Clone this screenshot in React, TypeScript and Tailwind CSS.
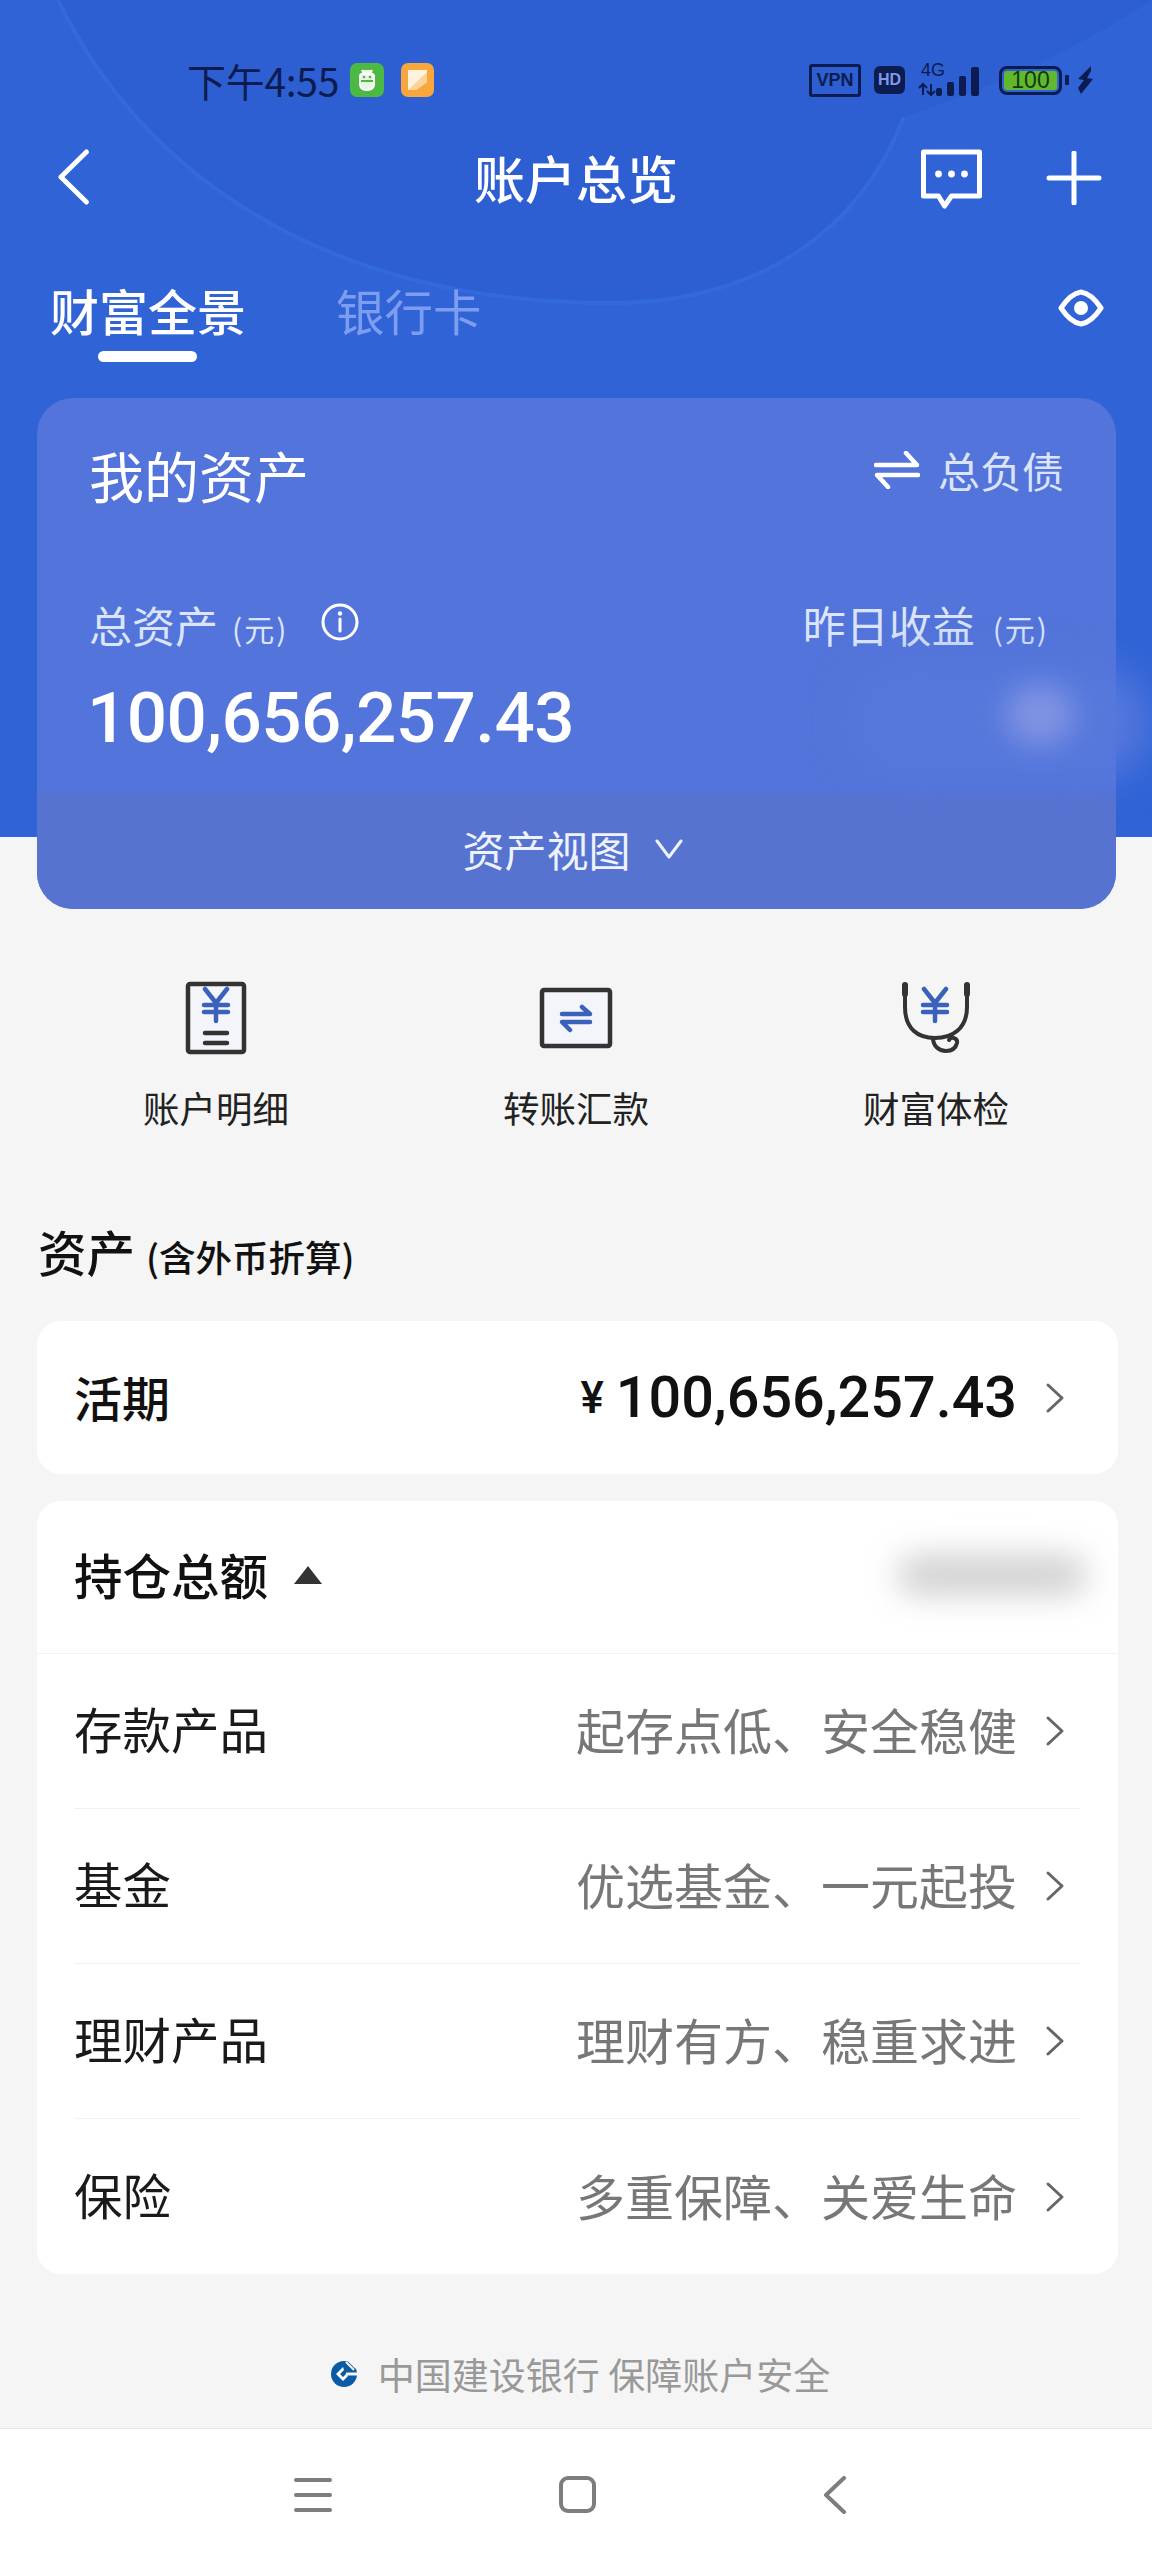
const CJK = { fontFamily: '"Noto Sans CJK SC", "Noto Sans", sans-serif' };

function Chevron() {
  return (
    <svg width="20" height="32" viewBox="0 0 20 32" fill="none" className="shrink-0">
      <path d="M3 3l14 13L3 29" stroke="#666" strokeWidth="3" strokeLinecap="round" strokeLinejoin="round" />
    </svg>
  );
}

function Yen({ x, y }: { x: number; y: number }) {
  return (
    <g transform={`translate(${x} ${y})`} stroke="#3a62bd" strokeWidth="4.5" strokeLinecap="round" fill="none">
      <path d="M-11 -16L0 -2L11 -16M0 -2V16M-12 0H12M-12 7H12" />
    </g>
  );
}

function StatusBar() {
  return (
    <div className="flex items-center h-[36px] mt-[62px] pl-[187px] pr-[58px] relative">
      <span className="text-[39px] leading-none text-[#0c1c50] w-[158px] tracking-[-0.3px] whitespace-nowrap" style={CJK}>下午4:55</span>
      <div className="w-[34px] h-[34px] rounded-[7px] bg-[#4cb944] flex items-center justify-center ml-[5px]">
        <svg width="20" height="24" viewBox="0 0 20 24" fill="none">
          <path d="M5 2l2 4h6l2-4M3 8c0-2 2-3 7-3s7 1 7 3v8c0 4-3 6-7 6s-7-2-7-6z" stroke="#fff" strokeWidth="2" fill="#e7f5e2" />
          <path d="M4 13h12" stroke="#4cb944" strokeWidth="2" />
          <circle cx="7" cy="9" r="1.3" fill="#4cb944" />
          <circle cx="13" cy="9" r="1.3" fill="#4cb944" />
        </svg>
      </div>
      <div className="w-[33px] h-[34px] rounded-[7px] bg-[#f8a63e] flex items-center justify-center ml-[17px]">
        <svg width="21" height="22" viewBox="0 0 21 22"><path d="M1 1h19v12L9 21H1z" fill="#fff3dd" /><path d="M1 21L20 3v10L9 21z" fill="#fcd398" /></svg>
      </div>
      <div className="ml-auto flex items-center">
        <div className="w-[52px] h-[33px] border-[3px] border-[#0c1c50] rounded-[3px] flex items-center justify-center text-[18px] font-bold text-[#0c1c50] leading-none" style={{ fontFamily: '"Liberation Sans", sans-serif' }}>VPN</div>
        <div className="w-[31px] h-[28px] ml-[13px] bg-[#0c1c50] rounded-[6px] flex items-center justify-center text-[16px] font-bold text-[#7d9be8] leading-none" style={{ fontFamily: '"Liberation Sans", sans-serif' }}>HD</div>
        <div className="relative w-[68px] h-[34px] ml-[13px]">
          <span className="absolute left-[3px] -top-[2px] text-[18px] leading-none text-[#0c1c50]" style={{ fontFamily: '"Liberation Sans", sans-serif' }}>4G</span>
          <svg width="68" height="34" viewBox="0 0 68 34" className="absolute left-0 top-0">
            <g fill="#0c1c50">
              <path d="M5 21v11M1 25l4-4 4 4M13 21v11M9 28l4 4 4-4" stroke="#0c1c50" strokeWidth="2" fill="none" />
              <rect x="18" y="25" width="6" height="8" rx="2" />
              <rect x="29" y="19" width="7" height="14" rx="2" />
              <rect x="41" y="13" width="7" height="20" rx="2" />
              <rect x="53" y="4" width="8" height="29" rx="2" />
            </g>
          </svg>
        </div>
        <div className="w-[63px] h-[29px] ml-[13px] border-[3px] border-[#0c1c50] rounded-[8px] p-[2px]">
          <div className="h-full rounded-[3px] bg-[#62b82c] flex items-center justify-center text-[23px] leading-none text-[#123a12]" style={{ fontFamily: '"Liberation Sans", sans-serif' }}>100</div>
        </div>
        <div className="w-[4px] h-[10px] ml-[3px] bg-[#0c1c50] rounded-[1px]" />
        <svg width="17" height="28" viewBox="0 0 17 28" className="ml-[8px]"><path d="M14 0L1 13l6 1-6 8 3 6 12-15-6-1 4-7z" fill="#0c1c50" /></svg>
      </div>
    </div>
  );
}

function NavBar() {
  return (
    <div className="relative flex items-center justify-between h-[56px] mt-[51px] pl-[58px] pr-[50px]">
      <svg width="34" height="56" viewBox="0 0 34 56" fill="none">
        <path d="M30 3L4 28l26 25" stroke="#fff" strokeWidth="5" strokeLinecap="round" strokeLinejoin="round" transform="translate(-1 0) scale(.98 1)" />
      </svg>
      <span className="absolute left-0 right-0 text-center text-[51px] leading-none font-medium text-white" style={CJK}>账户总览</span>
      <div className="flex items-center gap-[62px]">
        <svg width="65" height="60" viewBox="0 0 62 60" fill="none" className="mt-[4px]">
          <path d="M3 3h56v44H31l-7 10-6-10H3z" stroke="#fff" strokeWidth="5" strokeLinejoin="round" />
          <circle cx="18" cy="25" r="3.4" fill="#fff" /><circle cx="31" cy="25" r="3.4" fill="#fff" /><circle cx="44" cy="25" r="3.4" fill="#fff" />
        </svg>
        <svg width="56" height="54" viewBox="0 0 54 54" fill="none" className="mt-[2px]">
          <path d="M27 2v50M2 27h50" stroke="#fff" strokeWidth="5" strokeLinecap="round" />
        </svg>
      </div>
    </div>
  );
}

function Tabs() {
  return (
    <div className="relative flex items-center h-[52px] mt-[79px] pl-[50px] pr-[48px]">
      <div className="relative">
        <span className="block text-[49px] leading-[52px] font-medium text-white whitespace-nowrap" style={CJK}>财富全景</span>
        <div className="absolute left-[48px] top-[67px] w-[99px] h-[11px] rounded-full bg-white" />
      </div>
      <span className="ml-[90px] text-[48.5px] leading-[52px] text-[#7d9ef0]" style={CJK}>银行卡</span>
      <svg width="46" height="38" viewBox="0 0 46 38" fill="none" className="ml-auto -mt-[4px]">
        <path d="M3 19C9 10 16 4 23 3c7 1 14 7 20 16-6 9-13 15-20 16-7-1-14-7-20-16z" stroke="#fff" strokeWidth="5" strokeLinejoin="round" />
        <circle cx="23" cy="19" r="7" fill="#fff" />
      </svg>
    </div>
  );
}

function AssetCard() {
  return (
    <div className="relative ml-[37px] mr-[36px] mt-[62px] -mb-[72px] h-[511px] rounded-[36px] bg-[#5374da] flex flex-col overflow-hidden">
      <div className="flex justify-between pl-[52px] pr-[52px] pt-[46px]">
        <span className="text-[55px] leading-[60px] text-white" style={CJK}>我的资产</span>
        <div className="flex items-center h-[48px] gap-[18px] mt-[2px]">
          <svg width="46" height="38" viewBox="0 0 46 38" fill="none">
            <path d="M2 14h41L32 2M44 24H3l11 12" stroke="#fff" strokeWidth="4.5" strokeLinecap="round" strokeLinejoin="round" />
          </svg>
          <span className="text-[42px] leading-none text-[#dbe4fb]" style={CJK}>总负债</span>
        </div>
      </div>
      <div className="flex justify-between items-center pl-[52px] pr-[67px] mt-[99px] h-[42px]">
        <div className="flex items-center">
          <span className="text-[43px] leading-none text-[#dbe4fb]" style={CJK}>总资产</span>
          <span className="ml-[14px] text-[30px] leading-none mt-[8px] text-[#dbe4fb] tracking-[2px]" style={CJK}>(元)</span>
          <svg width="38" height="38" viewBox="0 0 38 38" fill="none" className="ml-[33px] -mt-[4px]">
            <circle cx="19" cy="19" r="17" stroke="#fff" strokeWidth="3" />
            <circle cx="19" cy="10.5" r="2.2" fill="#fff" />
            <path d="M19 16v12" stroke="#fff" strokeWidth="3" strokeLinecap="round" />
          </svg>
        </div>
        <div className="flex items-center">
          <span className="text-[43px] leading-none text-[#dbe4fb]" style={CJK}>昨日收益</span>
          <span className="ml-[18px] text-[30px] leading-none mt-[8px] text-[#dbe4fb] tracking-[2px]" style={CJK}>(元)</span>
        </div>
      </div>
      <div className="pl-[50px] mt-[33px] text-[71px] leading-[80px] font-medium text-white tracking-[-0.6px]" style={{ fontFamily: 'Roboto, sans-serif' }}>100,656,257.43</div>
      <div className="mt-auto h-[116px] pb-[4px] pr-[8px] bg-[#5673d0] flex items-center justify-center gap-[24px]">
        <span className="text-[42px] leading-none text-[#eef2fd]" style={CJK}>资产视图</span>
        <svg width="28" height="22" viewBox="0 0 28 22" fill="none"><path d="M2 3l12 16L26 3" stroke="#eef2fd" strokeWidth="3" strokeLinecap="round" strokeLinejoin="round" /></svg>
      </div>
    </div>
  );
}

function Shortcuts() {
  const items = [
    {
      label: '账户明细',
      icon: (
        <svg width="62" height="74" viewBox="0 0 62 74" fill="none">
          <rect x="3" y="3" width="56" height="68" rx="2" stroke="#333" strokeWidth="4.5" fill="#f3f5fa" />
          <Yen x={31} y={24} />
          <path d="M20 52h22M20 62h22" stroke="#333" strokeWidth="4.5" strokeLinecap="round" />
        </svg>
      ),
    },
    {
      label: '转账汇款',
      icon: (
        <svg width="74" height="62" viewBox="0 0 74 62" fill="none">
          <rect x="3" y="3" width="68" height="56" rx="2" stroke="#333" strokeWidth="4.5" fill="#f3f5fa" />
          <path d="M23 27h28l-8-7M51 35H23l8 8" stroke="#3a62bd" strokeWidth="4.5" strokeLinecap="round" strokeLinejoin="round" />
        </svg>
      ),
    },
    {
      label: '财富体检',
      icon: (
        <svg width="68" height="72" viewBox="0 0 68 72" fill="none">
          <path d="M3 3v22c0 22 13 31 30 31s32-9 32-31V3" stroke="#333" strokeWidth="4" />
          <path d="M3 3v9M65 3v9" stroke="#333" strokeWidth="6" strokeLinecap="round" />
          <path d="M31 56c0 8 6 13 13 13s10-4 11-8c1-5-6-7-8-3" stroke="#333" strokeWidth="4" strokeLinecap="round" />
          <Yen x={33} y={23} />
        </svg>
      ),
    },
  ];
  return (
    <div className="grid grid-cols-3 px-[36px] mt-[72px]">
      {items.map((it) => (
        <div key={it.label} className="flex flex-col items-center">
          <div className="h-[74px] flex items-center justify-center">{it.icon}</div>
          <span className="mt-[33px] text-[36.5px] leading-[40px] text-[#222]" style={CJK}>{it.label}</span>
        </div>
      ))}
    </div>
  );
}

function Row({ name, desc, border }: { name: string; desc: string; border: boolean }) {
  return (
    <div className={`mx-[37px] h-[155px] flex items-center ${border ? 'border-b border-[#f1f1f1]' : ''}`}>
      <span className="text-[48.5px] leading-none text-[#1a1a1a] -mt-[5px]" style={CJK}>{name}</span>
      <span className="ml-auto mr-[28px] text-[49px] leading-none text-[#777] -mt-[5px]" style={CJK}>{desc}</span>
      <div className="mr-[16px]"><Chevron /></div>
    </div>
  );
}

export default function App() {
  return (
    <div className="relative w-[1152px] h-[2560px] bg-[#f5f5f5] overflow-hidden flex flex-col" style={CJK}>
      <div className="relative h-[837px] bg-[#2f63d6] shrink-0 flex flex-col">
        <svg width="1152" height="837" viewBox="0 0 1152 837" className="absolute left-0 top-0" fill="none">
          <path d="M58 0C140 170 320 303 610 303C760 303 860 230 904 117C980 90 1060 60 1152 0V0Z" fill="#2d5fd2" />
          <path d="M58 0C140 170 320 303 610 303C760 303 860 230 904 117" stroke="#3469dd" strokeWidth="4" />
        </svg>
        <div className="relative flex flex-col">
          <StatusBar />
          <NavBar />
          <Tabs />
          <AssetCard />
        </div>
      </div>

      <div className="absolute left-[850px] top-[665px] w-[300px] h-[115px] rounded-full bg-[#5678dc] blur-[20px]" />
      <div className="absolute left-[1005px] top-[685px] w-[70px] h-[60px] rounded-full bg-[#8093e2] blur-[14px]" />

      <div className="mt-[72px]" />
      <Shortcuts />

      <div className="flex items-baseline pl-[38px] mt-[97px]">
        <span className="text-[48.5px] leading-[52px] font-medium text-[#111]" style={CJK}>资产</span>
        <span className="ml-[11px] text-[36.5px] leading-[52px] font-medium text-[#111]" style={CJK}>(含外币折算)</span>
      </div>

      <div className="ml-[37px] mr-[34px] mt-[38px] h-[153px] bg-white rounded-[24px] flex items-center pl-[37px] pr-[53px]">
        <span className="text-[48px] leading-none font-medium text-[#111] -mt-[4px]" style={CJK}>活期</span>
        <span className="ml-auto text-[44px] leading-none font-medium text-[#111] mr-[12px]" style={{ fontFamily: 'Roboto, sans-serif' }}>¥</span>
        <span className="text-[57.5px] leading-none font-medium text-[#111] mr-[28px]" style={{ fontFamily: 'Roboto, sans-serif' }}>100,656,257.43</span>
        <Chevron />
      </div>

      <div className="ml-[37px] mr-[34px] mt-[27px] bg-white rounded-[24px] overflow-hidden">
        <div className="relative h-[153px] flex items-center pl-[37px] border-b border-[#f3f3f3]">
          <span className="text-[48.5px] leading-none font-medium text-[#111] -mt-[5px]" style={CJK}>持仓总额</span>
          <svg width="30" height="20" viewBox="0 0 30 20" className="ml-[25px] -mt-[4px]"><path d="M15 1l14 18H1z" fill="#333" /></svg>
          <div className="absolute left-[860px] top-[54px] w-[190px] h-[40px] rounded-full bg-[#d0d0d0] blur-[16px]" />
        </div>
        <Row name="存款产品" desc="起存点低、安全稳健" border />
        <Row name="基金" desc="优选基金、一元起投" border />
        <Row name="理财产品" desc="理财有方、稳重求进" border />
        <Row name="保险" desc="多重保障、关爱生命" border={false} />
      </div>

      <div className="flex items-center justify-center mt-[80px] h-[40px] pl-[8px]">
        <svg width="28" height="32" viewBox="0 0 28 32">
          <circle cx="14" cy="16" r="13" fill="#0b5aa6" />
          <path d="M13 9l-7 7 7 7 5-5-2-2-3 3-3-3 4-4z" fill="#fff" />
          <path d="M16 4l8 8M19 3l7 7" stroke="#f5f5f5" strokeWidth="2" />
          <path d="M16 16h12" stroke="#f5f5f5" strokeWidth="3" />
        </svg>
        <span className="ml-[20px] text-[37px] leading-none text-[#999]" style={CJK}>中国建设银行 保障账户安全</span>
      </div>

      <div className="mt-auto h-[132px] bg-white border-t border-[#e8e8e8] relative flex items-center justify-between pl-[294px] pr-[304px]">
        <div className="flex flex-col justify-between w-[38px] h-[34px]">
          <div className="h-[4px] rounded-full bg-[#7d7d7d]" />
          <div className="h-[4px] rounded-full bg-[#7d7d7d]" />
          <div className="h-[4px] rounded-full bg-[#7d7d7d]" />
        </div>
        <div className="w-[37px] h-[37px] border-[4px] border-[#7d7d7d] rounded-[9px]" />
        <svg width="26" height="38" viewBox="0 0 26 38" fill="none"><path d="M22 2L4 19l18 17" stroke="#7d7d7d" strokeWidth="4" strokeLinecap="round" strokeLinejoin="round" /></svg>
      </div>
    </div>
  );
}
